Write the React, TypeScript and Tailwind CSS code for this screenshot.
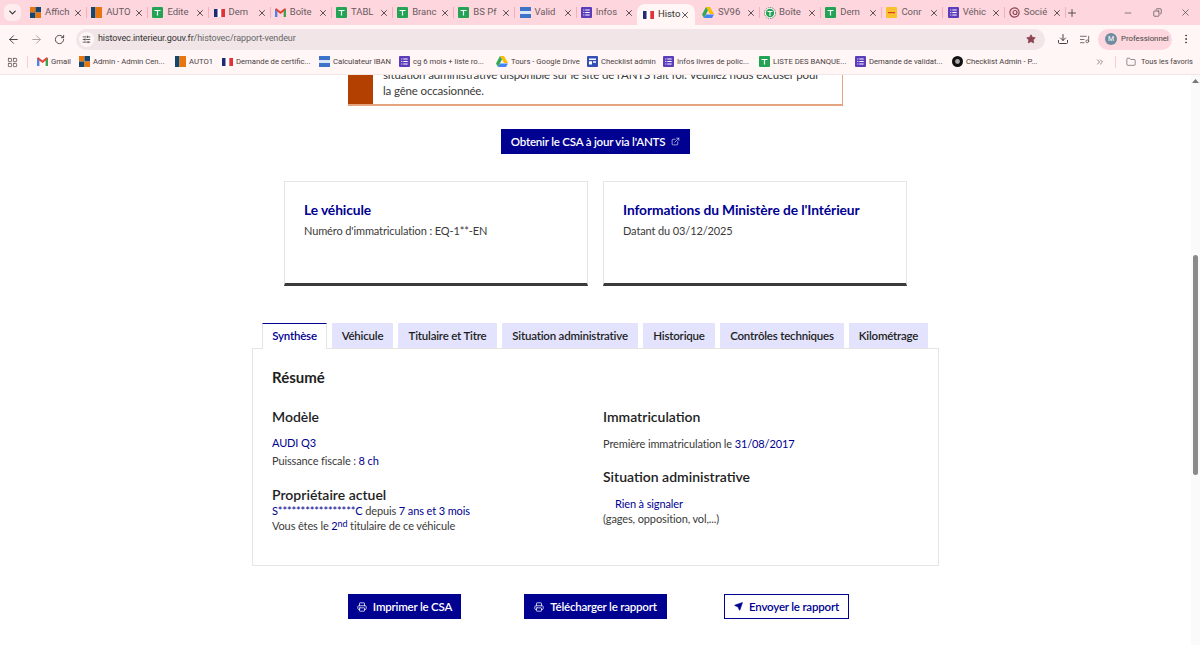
import React from 'react';
import { ChevronDown, X, Plus, ArrowLeft, ArrowRight, RotateCw, SlidersHorizontal, Star, Download, ListMusic, EllipsisVertical, LayoutGrid, ChevronsRight, Folder, Minus, Copy, ExternalLink, Printer, Send } from 'lucide-react';

type Fav = 'orange' | 'blue' | 'sheet' | 'fr' | 'gmail' | 'iban' | 'form' | 'drive' | 'ring' | 'yellow' | 'soc' | 'table' | 'dark';

function Favicon({ kind }: { kind: Fav }) {
    if (kind === 'orange') return (
        <svg width="11" height="11" viewBox="0 0 11 11" className="shrink-0"><rect width="5.5" height="5.5" fill="#e8760f" /><rect x="5.5" width="5.5" height="5.5" fill="#14466e" /><rect y="5.5" width="5.5" height="5.5" fill="#14466e" /><rect x="5.5" y="5.5" width="5.5" height="5.5" fill="#e8760f" /></svg>
    );
    if (kind === 'blue') return (
        <svg width="11" height="11" viewBox="0 0 11 11" className="shrink-0"><rect width="4.5" height="11" fill="#14466e" /><rect x="4.5" width="6.5" height="11" fill="#e8760f" /></svg>
    );
    if (kind === 'sheet') return (
        <svg width="11" height="11" viewBox="0 0 11 11" className="shrink-0"><rect width="11" height="11" rx="1" fill="#23a455" /><path d="M2.5 3.5h6M5.5 3.5v5" stroke="#fff" strokeWidth="1.2" /></svg>
    );
    if (kind === 'fr') return (
        <svg width="11" height="8" viewBox="0 0 11 8" className="shrink-0"><rect width="3.7" height="8" fill="#1f2a78" /><rect x="3.7" width="3.6" height="8" fill="#fff" /><rect x="7.3" width="3.7" height="8" fill="#e1323c" /></svg>
    );
    if (kind === 'gmail') return (
        <svg width="11" height="9" viewBox="0 0 11 9" className="shrink-0"><path d="M0 1v8h2.2V3.5L5.5 6l3.3-2.5V9H11V1L9.6.3 5.5 3.4 1.4.3z" fill="#ea4335" /><path d="M0 1v8h2.2V3.5z" fill="#4285f4" /><path d="M11 1v8H8.8V3.5z" fill="#34a853" /></svg>
    );
    if (kind === 'iban') return (
        <svg width="11" height="11" viewBox="0 0 11 11" className="shrink-0"><rect width="11" height="11" fill="#3b74c9" /><rect y="4" width="11" height="3" fill="#dbe6f7" /></svg>
    );
    if (kind === 'form') return (
        <svg width="11" height="11" viewBox="0 0 11 11" className="shrink-0"><rect width="11" height="11" rx="1" fill="#5b3dbb" /><path d="M2.3 3h1M4.3 3h4.4M2.3 5.5h1M4.3 5.5h4.4M2.3 8h1M4.3 8h4.4" stroke="#fff" strokeWidth="1" /></svg>
    );
    if (kind === 'table') return (
        <svg width="11" height="11" viewBox="0 0 11 11" className="shrink-0"><rect width="11" height="11" rx="1" fill="#3550b5" /><path d="M2 2.5h7v1.6H2zM2 5.3h3v3.2H2zM6 5.3h3v1.4H6z" fill="#fff" /></svg>
    );
    if (kind === 'drive') return (
        <svg width="12" height="11" viewBox="0 0 12 11" className="shrink-0"><path d="M4 0h4l4 7H8z" fill="#fbbc04" /><path d="M4 0l2 3.5L2 11 0 7.5z" fill="#34a853" /><path d="M4 7.5h8L10 11H2z" fill="#4285f4" /></svg>
    );
    if (kind === 'ring') return (
        <svg width="12" height="12" viewBox="0 0 12 12" className="shrink-0"><circle cx="6" cy="6" r="5.5" fill="#fff" stroke="#777" strokeDasharray="1.5 .8" /><circle cx="6" cy="6" r="4.2" fill="#23a455" /><path d="M3.5 4.5h5M6 4.5V9" stroke="#fff" strokeWidth="1.1" /></svg>
    );
    if (kind === 'yellow') return (
        <svg width="11" height="11" viewBox="0 0 11 11" className="shrink-0"><rect width="11" height="11" rx="1" fill="#fbc02d" /><rect x="2" y="5" width="7" height="1.2" fill="#d8392b" /></svg>
    );
    if (kind === 'soc') return (
        <svg width="11" height="11" viewBox="0 0 11 11" className="shrink-0"><circle cx="5.5" cy="5.5" r="4.6" fill="none" stroke="#8c4452" strokeWidth="1.2" /><circle cx="6" cy="5.5" r="2" fill="none" stroke="#8c4452" strokeWidth="1.2" /></svg>
    );
    return (
        <svg width="11" height="11" viewBox="0 0 11 11" className="shrink-0"><circle cx="5.5" cy="5.5" r="5.5" fill="#111" /><circle cx="5.5" cy="5.5" r="2.4" fill="#aaa" /></svg>
    );
}

// libelles deja raccourcis comme dans la barre d'onglets
const tabs: { label: string; fav: Fav; active?: boolean; noSep?: boolean }[] = [
    { label: 'Affich', fav: 'orange' },
    { label: 'AUTO', fav: 'blue' },
    { label: 'Edite', fav: 'sheet' },
    { label: 'Dem', fav: 'fr' },
    { label: 'Boîte', fav: 'gmail' },
    { label: 'TABL', fav: 'sheet' },
    { label: 'Branc', fav: 'sheet' },
    { label: 'BS Pf', fav: 'sheet' },
    { label: 'Valid', fav: 'iban' },
    { label: 'Infos', fav: 'form', noSep: true },
    { label: 'Histo', fav: 'fr', active: true },
    { label: 'SV96', fav: 'drive' },
    { label: 'Boîte', fav: 'ring' },
    { label: 'Dem', fav: 'sheet' },
    { label: 'Conr', fav: 'yellow' },
    { label: 'Véhic', fav: 'form' },
    { label: 'Socié', fav: 'soc' },
];

const bookmarks: { label: string; fav: Fav; w: string }[] = [
    { label: 'Gmail', fav: 'gmail', w: 'w-[42px]' },
    { label: 'Admin - Admin Cen...', fav: 'orange', w: 'w-[96px]' },
    { label: 'AUTO1', fav: 'blue', w: 'w-[47px]' },
    { label: 'Demande de certific...', fav: 'fr', w: 'w-[97px]' },
    { label: 'Calculateur IBAN', fav: 'iban', w: 'w-[80px]' },
    { label: 'cg 6 mois + liste ro...', fav: 'form', w: 'w-[97px]' },
    { label: 'Tours - Google Drive', fav: 'drive', w: 'w-[91px]' },
    { label: 'Checklist admin', fav: 'table', w: 'w-[76px]' },
    { label: 'Infos livres de polic...', fav: 'form', w: 'w-[96px]' },
    { label: 'LISTE DES BANQUE...', fav: 'sheet', w: 'w-[96px]' },
    { label: 'Demande de validat...', fav: 'form', w: 'w-[97px]' },
    { label: 'Checklist Admin - P...', fav: 'dark', w: 'w-[90px]' },
];

function BrowserChrome() {
    return (
        <div className="shrink-0 font-['Roboto','Liberation_Sans',sans-serif]">
            <div className="h-[25px] bg-[#fdd6de] flex items-center pl-1">
                <div className="w-[17px] h-[17px] mr-[6px] rounded-md bg-[#ffecef] flex items-center justify-center shrink-0">
                    <ChevronDown size={11} strokeWidth={2.5} className="text-[#333]" />
                </div>
                {tabs.map((t, i) =>
                    t.active ? (
                        <div key={i} className="-ml-[2px] mr-[5px] mt-1 w-[58px] h-[21px] shrink-0 flex items-center pl-[6px] bg-[#fff6f5] rounded-t-lg">
                            <Favicon kind={t.fav} />
                            <span className="ml-[4px] whitespace-nowrap text-[9.5px] text-[#333]">{t.label}</span>
                            <X size={10} strokeWidth={2} className="ml-auto mr-[5px] text-[#3c3236] shrink-0" />
                        </div>
                    ) : (
                        <div key={i} className="w-[61.2px] h-4 shrink-0 flex items-center pl-[3px]">
                            <div className="w-[11px] flex justify-center shrink-0"><Favicon kind={t.fav} /></div>
                            <span className="ml-[4px] w-[24px] whitespace-nowrap text-[9.5px] text-[#6b5a5e]">{t.label}</span>
                            <X size={10} strokeWidth={2} className="ml-[4px] text-[#3c3236] shrink-0" />
                            {!t.noSep && <div className="ml-[3px] w-px h-[11px] bg-[#f5aebc] shrink-0" />}
                        </div>
                    )
                )}
                <Plus size={12} strokeWidth={1.8} className="-ml-px text-[#444] shrink-0" />
                <div className="ml-auto flex items-center text-[#444]">
                    <Minus size={10} strokeWidth={1.5} className="mr-[20px]" />
                    <Copy size={9} strokeWidth={1.8} className="mr-[18px] -scale-x-100" />
                    <X size={11} strokeWidth={1.5} className="mr-[9px]" />
                </div>
            </div>
            <div className="h-[25px] bg-[#fff6f5] flex items-center pl-[7px] pt-[3px]">
                <ArrowLeft size={13} strokeWidth={1.8} className="text-[#444] mr-[10px] shrink-0" />
                <ArrowRight size={13} strokeWidth={1.8} className="text-[#a9a3a4] mr-[11px] shrink-0" />
                <RotateCw size={11} strokeWidth={2} className="text-[#444] mr-[11px] shrink-0" />
                <div className="w-[969px] h-[21px] shrink-0 rounded-full bg-[#f1e5e8] flex items-center pl-[3px]">
                    <div className="w-[15px] h-[15px] rounded-full bg-[#fff6f5] flex items-center justify-center mr-[4px]">
                        <SlidersHorizontal size={9} strokeWidth={2} className="text-[#333]" />
                    </div>
                    <span className="text-[9px] tracking-[-0.1px] text-[#333]">histovec.interieur.gouv.fr<span className="text-[#666]">/histovec/rapport-vendeur</span></span>
                    <Star size={10} className="ml-auto mr-[9px] text-[#8c4452] fill-[#8c4452]" />
                </div>
                <Download size={12} strokeWidth={2} className="ml-[12px] text-[#444] shrink-0" />
                <ListMusic size={11} strokeWidth={2} className="ml-[10px] text-[#666] shrink-0" />
                <div className="ml-[8px] w-[74px] h-[21px] rounded-full bg-[#fdd6de] flex items-center pl-[7px] shrink-0">
                    <div className="w-3 h-3 rounded-full bg-[#6f8d9e] text-white text-[7px] flex items-center justify-center">M</div>
                    <span className="ml-[4px] text-[7.8px] text-[#444]">Professionnel</span>
                </div>
                <EllipsisVertical size={12} strokeWidth={2} className="ml-[8px] text-[#444] shrink-0" />
            </div>
            <div className="h-[25px] bg-[#fff6f5] flex items-center pl-[7px] border-b border-[#f3e6e6] text-[7.7px] text-[#4a4042]">
                <LayoutGrid size={11} strokeWidth={1.5} className="mr-[9px] shrink-0" />
                <div className="w-px h-3 bg-[#f5cfd6] mr-[9px] shrink-0" />
                {bookmarks.map((b) => (
                    <div key={b.label} className={`flex items-center gap-[3px] shrink-0 whitespace-nowrap ${b.w}`}>
                        <Favicon kind={b.fav} />
                        <span>{b.label}</span>
                    </div>
                ))}
                <ChevronsRight size={10} strokeWidth={1.5} className="ml-[53px] shrink-0" />
                <div className="w-px h-3 bg-[#f5cfd6] ml-[10px] mr-[10px] shrink-0" />
                <Folder size={10} strokeWidth={1.4} className="shrink-0" />
                <span className="ml-[5px] whitespace-nowrap text-[7.4px]">Tous les favoris</span>
            </div>
        </div>
    );
}

function PrimaryButton({ w, children }: { w: string; children: React.ReactNode }) {
    return (
        <button className={`h-[25px] ${w} bg-[#000091] text-white text-[11.5px] tracking-[-0.2px] font-semibold flex items-center justify-center gap-[6px] whitespace-nowrap`}>
            {children}
        </button>
    );
}

const tabNames: { n: string; w: string }[] = [
    { n: 'Véhicule', w: 'w-[61px]' },
    { n: 'Titulaire et Titre', w: 'w-[99px]' },
    { n: 'Situation administrative', w: 'w-[136px]' },
    { n: 'Historique', w: 'w-[72px]' },
    { n: 'Contrôles techniques', w: 'w-[124px]' },
    { n: 'Kilométrage', w: 'w-[79px]' },
];

export default function App() {
    return (
        <div className="h-[645px] w-[1200px] overflow-hidden flex flex-col bg-white font-['Lato','Liberation_Sans',sans-serif]">
            <BrowserChrome />
            <div className="flex-1 flex min-h-0">
                <main className="flex-1 min-w-0 overflow-hidden text-[11px] tracking-[-0.12px] text-[#3a3a3a]">
                    {/* Alerte tronquee par le scroll */}
                    <div className="w-[495px] h-[31px] ml-[348px] flex border-b-2 border-r border-[#e5a27f] overflow-hidden">
                        <div className="w-[25px] bg-[#b34000] shrink-0" />
                        <div className="ml-[10px] -mt-[8px] w-[450px] leading-[16px] text-[11.5px] tracking-[-0.15px]">
                            <p className="whitespace-nowrap">situation administrative disponible sur le site de l'ANTS fait foi. Veuillez nous excuser pour</p>
                            <p>la gêne occasionnée.</p>
                        </div>
                    </div>

                    <div className="flex mt-[23px] ml-[501px]">
                        <PrimaryButton w="w-[189px]">
                            Obtenir le CSA à jour via l'ANTS
                            <ExternalLink size={9} strokeWidth={1.6} />
                        </PrimaryButton>
                    </div>

                    <div className="flex gap-[15px] ml-[284px] mt-[27px]">
                        <div className="w-[304px] h-[105px] border border-[#e5e5e5] border-b-[3px] border-b-[#3a3a3a] pl-[19px] pt-[19px]">
                            <h2 className="text-[13.8px] tracking-[-0.1px] leading-[18px] font-bold text-[#000091]">Le véhicule</h2>
                            <p className="mt-[4px] leading-[16px]">Numéro d'immatriculation : EQ-1**-EN</p>
                        </div>
                        <div className="w-[304px] h-[105px] border border-[#e5e5e5] border-b-[3px] border-b-[#3a3a3a] pl-[19px] pt-[19px]">
                            <h2 className="text-[13.8px] tracking-[-0.1px] leading-[18px] font-bold text-[#000091]">Informations du Ministère de l'Intérieur</h2>
                            <p className="mt-[4px] leading-[16px]">Datant du 03/12/2025</p>
                        </div>
                    </div>

                    <div className="ml-[252px] w-[687px] mt-[37px]">
                        <div className="flex gap-[5px] pl-[10px] h-[25px] font-semibold text-[11.5px] tracking-[-0.2px] text-[#1e1e1e]">
                            <div className="relative z-10 w-[65px] h-[26px] pb-px bg-white border-t border-x border-[#e5e5e5] border-t-[#000091] flex items-center justify-center text-[#000091]">Synthèse</div>
                            {tabNames.map((t) => (
                                <div key={t.n} className={`h-[25px] ${t.w} bg-[#e3e3fd] flex items-center justify-center whitespace-nowrap`}>{t.n}</div>
                            ))}
                        </div>
                        <div className="h-[218px] border border-[#e5e5e5] px-[19px] pt-[18px]">
                            <h3 className="text-[15px] tracking-normal leading-[20px] font-bold text-[#1e1e1e]">Résumé</h3>
                            <div className="flex mt-[20px]">
                                <div className="w-[331px]">
                                    <h4 className="text-[14px] tracking-normal leading-[20px] font-semibold text-[#1e1e1e]">Modèle</h4>
                                    <p className="mt-[8px] leading-[16px] text-[#000091]">AUDI Q3</p>
                                    <p className="mt-[2px] leading-[16px]">Puissance fiscale : <span className="text-[#000091]">8 ch</span></p>
                                    <h4 className="mt-[16px] text-[14px] tracking-normal leading-[20px] font-semibold text-[#1e1e1e]">Propriétaire actuel</h4>
                                    <p className="leading-[14px] -mt-[1px]"><span className="text-[#000091]">S*****************C</span> depuis <span className="text-[#000091]">7 ans et 3 mois</span></p>
                                    <p className="leading-[16px]">Vous êtes le <span className="text-[#000091]">2<sup className="text-[9px] -top-[3px]">nd</sup></span> titulaire de ce véhicule</p>
                                </div>
                                <div>
                                    <h4 className="text-[14px] tracking-normal leading-[20px] font-semibold text-[#1e1e1e]">Immatriculation</h4>
                                    <p className="mt-[9px] leading-[16px]">Première immatriculation le <span className="text-[#000091]">31/08/2017</span></p>
                                    <h4 className="mt-[15px] text-[14px] tracking-normal leading-[20px] font-semibold text-[#1e1e1e]">Situation administrative</h4>
                                    <p className="mt-[9px] ml-[12px] leading-[16px] text-[#000091]">Rien à signaler</p>
                                    <p className="leading-[14px]">(gages, opposition, vol,...)</p>
                                </div>
                            </div>
                        </div>
                    </div>

                    <div className="flex ml-[348px] mt-[28px]">
                        <PrimaryButton w="w-[113px]"><Printer size={10} strokeWidth={1.8} />Imprimer le CSA</PrimaryButton>
                        <div className="w-[63px]" />
                        <PrimaryButton w="w-[143px]"><Printer size={10} strokeWidth={1.8} />Télécharger le rapport</PrimaryButton>
                        <div className="w-[57px]" />
                        <button className="h-[25px] w-[125px] bg-white border border-[#000091] text-[#000091] text-[11.5px] tracking-[-0.2px] font-semibold flex items-center justify-center gap-[6px] whitespace-nowrap">
                            <Send size={9} strokeWidth={2} className="fill-[#000091]" />Envoyer le rapport
                        </button>
                    </div>
                </main>
                {/* Ascenseur */}
                <div className="w-[9px] shrink-0 bg-[#fafafa] pt-[3px]">
                    <svg width="9" height="6" viewBox="0 0 9 6" className="block"><path d="M4.5 1L8 5H1z" fill="#777" /></svg>
                    <div className="w-[5px] ml-[2px] mt-[171px] h-[220px] rounded-full bg-[#8a8a8a]" />
                </div>
            </div>
        </div>
    );
}
